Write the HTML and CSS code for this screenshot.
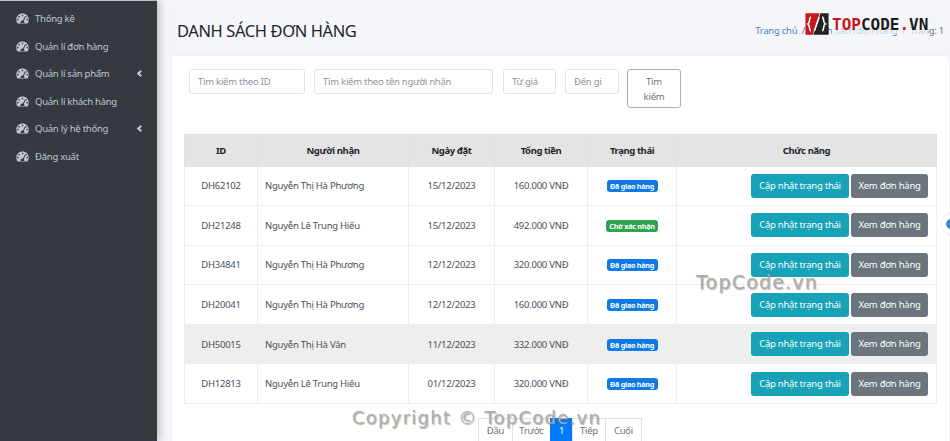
FILE: index.html
```html
<!DOCTYPE html>
<html lang="vi">
<head>
  <meta charset="UTF-8" />
  <title>Danh sách đơn hàng</title>
  <link rel="stylesheet" href="styles.css">
</head>
<body>
  <svg class="icon-defs" width="0" height="0">
    <symbol id="gauge" viewBox="0 0 14 12">
      <path fill-rule="evenodd" d="M7 0.5C3.2 0.5 0.2 3.5 0.2 7.2c0 1.5 0.4 2.8 1.2 3.9 0.2 0.3 0.5 0.4 0.8 0.4h9.6c0.3 0 0.6-0.1 0.8-0.4 0.8-1.1 1.2-2.4 1.2-3.9C13.8 3.5 10.8 0.5 7 0.5zM7 1.9a0.9 0.9 0 1 1 0 1.8 0.9 0.9 0 0 1 0-1.8zM3.2 3.3a0.9 0.9 0 1 1 0 1.8 0.9 0.9 0 0 1 0-1.8zM10.8 3.3a0.9 0.9 0 1 1 0 1.8 0.9 0.9 0 0 1 0-1.8zM1.9 6.4a0.9 0.9 0 1 1 0 1.8 0.9 0.9 0 0 1 0-1.8zM12.1 6.4a0.9 0.9 0 1 1 0 1.8 0.9 0.9 0 0 1 0-1.8zM9.3 4.2l0.8 0.3-1.6 4.3c0.4 0.3 0.6 0.7 0.6 1.2 0 0.4-0.1 0.7-0.3 0.9H5.2c-0.2-0.2-0.3-0.5-0.3-0.9 0-1.1 0.9-1.9 2-1.9h0.7z"/>
    </symbol>
  </svg>

  <div class="page">
    <aside class="sidebar">
      <a class="nav-item"><svg class="nav-icon"><use href="#gauge"/></svg>Thống kê</a>
      <a class="nav-item"><svg class="nav-icon"><use href="#gauge"/></svg>Quản lí đơn hàng</a>
      <a class="nav-item"><svg class="nav-icon"><use href="#gauge"/></svg>Quản lí sản phẩm<span class="caret"></span></a>
      <a class="nav-item"><svg class="nav-icon"><use href="#gauge"/></svg>Quản lí khách hàng</a>
      <a class="nav-item"><svg class="nav-icon"><use href="#gauge"/></svg>Quản lý hệ thống<span class="caret"></span></a>
      <a class="nav-item"><svg class="nav-icon"><use href="#gauge"/></svg>Đăng xuất</a>
    </aside>

    <main class="content">
      <div class="content-header">
        <h1>DANH SÁCH ĐƠN HÀNG</h1>
        <div class="breadcrumb"><a>Trang chủ</a><span class="sep">/</span><a>Danh sách đơn hàng</a><span class="sep">/</span><span class="muted">Trang: 1</span></div>
      </div>

      <section class="card">
        <form class="filters">
          <input class="w-id" placeholder="Tìm kiếm theo ID">
          <input class="w-name" placeholder="Tìm kiếm theo tên người nhận">
          <input class="w-price-from" placeholder="Từ giá">
          <input class="w-price-to" placeholder="Đến gi">
          <button type="button" class="btn-search">Tìm kiếm</button>
        </form>

        <table class="orders">
          <colgroup>
            <col class="c-id"><col class="c-name"><col class="c-date"><col class="c-total"><col class="c-status"><col>
          </colgroup>
          <thead>
            <tr><th>ID</th><th>Người nhận</th><th>Ngày đặt</th><th>Tổng tiền</th><th>Trạng thái</th><th>Chức năng</th></tr>
          </thead>
          <tbody>
            <tr>
              <td>DH62102</td><td class="left">Nguyễn Thị Hà Phương</td><td>15/12/2023</td><td>160.000 VNĐ</td>
              <td><span class="badge blue">Đã giao hàng</span></td>
              <td class="actions"><a class="btn teal">Cập nhật trạng thái</a><a class="btn grey">Xem đơn hàng</a></td>
            </tr>
            <tr>
              <td>DH21248</td><td class="left">Nguyễn Lê Trung Hiếu</td><td>15/12/2023</td><td>492.000 VNĐ</td>
              <td><span class="badge green">Chờ xác nhận</span></td>
              <td class="actions"><a class="btn teal">Cập nhật trạng thái</a><a class="btn grey">Xem đơn hàng</a></td>
            </tr>
            <tr>
              <td>DH34841</td><td class="left">Nguyễn Thị Hà Phương</td><td>12/12/2023</td><td>320.000 VNĐ</td>
              <td><span class="badge blue">Đã giao hàng</span></td>
              <td class="actions"><a class="btn teal">Cập nhật trạng thái</a><a class="btn grey">Xem đơn hàng</a></td>
            </tr>
            <tr>
              <td>DH20041</td><td class="left">Nguyễn Thị Hà Phương</td><td>12/12/2023</td><td>160.000 VNĐ</td>
              <td><span class="badge blue">Đã giao hàng</span></td>
              <td class="actions"><a class="btn teal">Cập nhật trạng thái</a><a class="btn grey">Xem đơn hàng</a></td>
            </tr>
            <tr class="hover">
              <td>DH50015</td><td class="left">Nguyễn Thị Hà Vân</td><td>11/12/2023</td><td>332.000 VNĐ</td>
              <td><span class="badge blue">Đã giao hàng</span></td>
              <td class="actions"><a class="btn teal">Cập nhật trạng thái</a><a class="btn grey">Xem đơn hàng</a></td>
            </tr>
            <tr>
              <td>DH12813</td><td class="left">Nguyễn Lê Trung Hiếu</td><td>01/12/2023</td><td>320.000 VNĐ</td>
              <td><span class="badge blue">Đã giao hàng</span></td>
              <td class="actions"><a class="btn teal">Cập nhật trạng thái</a><a class="btn grey">Xem đơn hàng</a></td>
            </tr>
          </tbody>
        </table>

        <nav class="pager">
          <a class="p-first">Đầu</a><a class="p-prev">Trước</a><a class="active">1</a><a class="p-next">Tiếp</a><a class="p-last">Cuối</a>
        </nav>
      </section>
    </main>
  </div>

  <!-- overlays from the screenshot -->
  <div class="logo">
    <svg class="logo-mark" viewBox="0 0 28 26">
      <path fill="#c8171e" d="M0.5 0.5H17L9 25.5H0.5z"/>
      <path fill="#222" d="M18 0.5H27.5V25.5H10z"/>
      <path fill="none" stroke="#fff" stroke-width="1.8" d="M7 5C4.5 5 6 12 3.5 13C6 14 4.5 21 7 21M20 5C22.5 5 21 12 23.5 13C21 14 22.5 21 20 21M16.5 5L11 21"/>
    </svg>
    <span class="logo-text"><b class="red">TOP</b>CODE<b class="red">.</b>VN</span>
  </div>
  <div class="mark mark-mid">TopCode.vn</div>
  <div class="mark mark-bottom">Copyright © TopCode.vn</div>
  <div class="float-widget"><span></span></div>
</body>
</html>
```

FILE: styles.css
```css
* {
  box-sizing: border-box;
}
html, body {
  margin: 0;
  height: 441px;
  overflow: hidden;
}
body {
  font-family: "Noto Sans", "Open Sans", sans-serif;
  font-size: 9.5px;
  letter-spacing: -0.25px;
  color: #495057;
  background: #f4f6f9;
  position: relative;
}
.icon-defs {
  position: absolute;
}
.page {
  display: flex;
  height: 441px;
}

/* sidebar */
.sidebar {
  width: 157px;
  flex: none;
  background: #343a40;
  border-top: 1px solid #b9bcbf;
  padding-top: 4px;
  box-shadow: 3px 0 8px rgba(0,0,0,0.22);
  z-index: 2;
}
.nav-item {
  display: flex;
  align-items: center;
  height: 27.5px;
  padding-left: 16px;
  color: #c2c7d0;
  white-space: nowrap;
}
.nav-icon {
  width: 13px;
  height: 11px;
  fill: #c2c7d0;
  margin-right: 6px;
  flex: none;
}
.caret {
  margin-left: auto;
  margin-right: 14px;
  width: 5px;
  height: 5px;
  border-left: 2px solid #c2c7d0;
  border-bottom: 2px solid #c2c7d0;
  transform: rotate(45deg);
}

/* main */
.content {
  flex: 1;
  min-width: 0;
  padding: 0 1px 0 15px;
}
.content-header {
  height: 56px;
  display: flex;
  justify-content: space-between;
  align-items: center;
  padding: 4px 5px 0 5px;
}
h1 {
  margin: 0;
  font-size: 16.5px;
  letter-spacing: -0.4px;
  font-weight: 400;
  color: #212529;
}
.breadcrumb {
  color: #6c757d;
  white-space: nowrap;
}
.breadcrumb a {
  color: #4a86c8;
}
.breadcrumb .sep {
  margin: 0 4.6px;
  color: #6c757d;
}
.card {
  background: #fff;
  border-radius: 4px;
  height: 400px;
  padding: 13px 12px 0 12px;
  box-shadow: 0 0 2px rgba(0,0,0,0.08);
}

/* filter row */
.filters {
  display: flex;
  align-items: flex-start;
  gap: 9px;
  padding-left: 5px;
  height: 65px;
}
.filters input {
  height: 25px;
  border: 1px solid #dfe3e7;
  border-radius: 3px;
  padding: 0 8px;
  font: inherit;
  letter-spacing: inherit;
  outline: none;
}
.filters input::placeholder {
  color: #8d959c;
}
.w-id { width: 116px; }
.w-name { width: 179px; }
.filters .w-price-from { width: 53px; margin-left: 1px; }
.w-price-to { width: 54px; }
.btn-search {
  width: 54px;
  height: 39px;
  margin-left: -1px;
  background: #fff;
  border: 1px solid #a9aeb3;
  border-radius: 3px;
  color: #6c757d;
  font: inherit;
  letter-spacing: inherit;
  line-height: 15px;
  padding: 0 8px;
}

/* table */
.orders {
  width: 753px;
  border-collapse: collapse;
  table-layout: fixed;
}
.c-id { width: 73px; }
.c-name { width: 151px; }
.c-date { width: 86px; }
.c-total { width: 93px; }
.c-status { width: 89px; }
.orders th, .orders td {
  border: 1px solid #eceef0;
  text-align: center;
  padding: 0;
}
.orders th {
  height: 31.5px;
  background: #e4e4e4;
  border-color: #e0e0e0;
  color: #212529;
  font-weight: 700;
  letter-spacing: -0.4px;
}
.orders td {
  height: 39.6px;
}
.orders td.left {
  text-align: left;
  padding-left: 7px;
}
.orders tr.hover td {
  background: #eeeeee;
}
.orders td.actions {
  text-align: right;
  padding-right: 8px;
  white-space: nowrap;
  font-size: 0;
}
.badge {
  display: inline-block;
  padding: 2px 3.5px;
  border-radius: 3px;
  color: #fff;
  font-size: 7.2px;
  font-weight: 700;
  line-height: 8px;
}
.badge.blue { background: #0d7ae6; }
.badge.green { background: #2ea44f; }
.btn {
  display: inline-block;
  height: 24px;
  line-height: 24px;
  border-radius: 3px;
  color: #fff;
  font-size: 9.5px;
  text-align: center;
}
.btn.teal {
  width: 98px;
  background: #17a2b8;
  margin-right: 2px;
}
.btn.grey {
  width: 77px;
  background: #6c757d;
}

/* pagination */
.pager {
  display: flex;
  justify-content: center;
  margin-top: 14px;
}
.pager a {
  height: 24px;
  line-height: 24px;
  text-align: center;
  border: 1px solid #dee2e6;
  margin-left: -1px;
  color: #6c757d;
  background: #fff;
}
.pager .p-first { width: 35px; }
.pager .p-prev { width: 39px; }
.pager .active { width: 23px; }
.pager .p-next { width: 34px; }
.pager .p-last { width: 37px; }
.pager a.active {
  background: #007bff;
  border-color: #007bff;
  color: #fff;
}

/* overlays */
.logo {
  position: absolute;
  left: 805px;
  top: 12px;
  display: flex;
  align-items: center;
  gap: 3px;
  z-index: 5;
}
.logo-mark {
  width: 24px;
  height: 24px;
}
.logo-text {
  font-family: "DejaVu Sans Mono", "Liberation Mono", monospace;
  font-size: 16px;
  font-weight: 700;
  color: #1c1c1c;
  letter-spacing: 0;
  background: rgba(244,246,249,0.7);
}
.logo-text .red {
  color: #c8171e;
}
.mark {
  position: absolute;
  font-family: "DejaVu Sans", sans-serif;
  color: #adadad;
  text-shadow: 1px 1px 1px rgba(90,90,90,0.45);
  z-index: 5;
  white-space: nowrap;
}
.mark-mid {
  left: 696px;
  top: 271px;
  font-size: 19px;
  letter-spacing: 1.2px;
}
.mark-bottom {
  left: 352px;
  top: 407px;
  font-size: 18px;
  letter-spacing: 1.25px;
}
.float-widget {
  position: absolute;
  left: 942px;
  top: 214px;
  width: 20px;
  height: 20px;
  border-radius: 50%;
  background: #fff;
  box-shadow: 0 0 3px rgba(0,0,0,0.15);
  z-index: 4;
}
.float-widget span {
  position: absolute;
  left: 4px;
  top: 5px;
  width: 10px;
  height: 10px;
  border-radius: 50%;
  background: #2f8fe0;
}
```
